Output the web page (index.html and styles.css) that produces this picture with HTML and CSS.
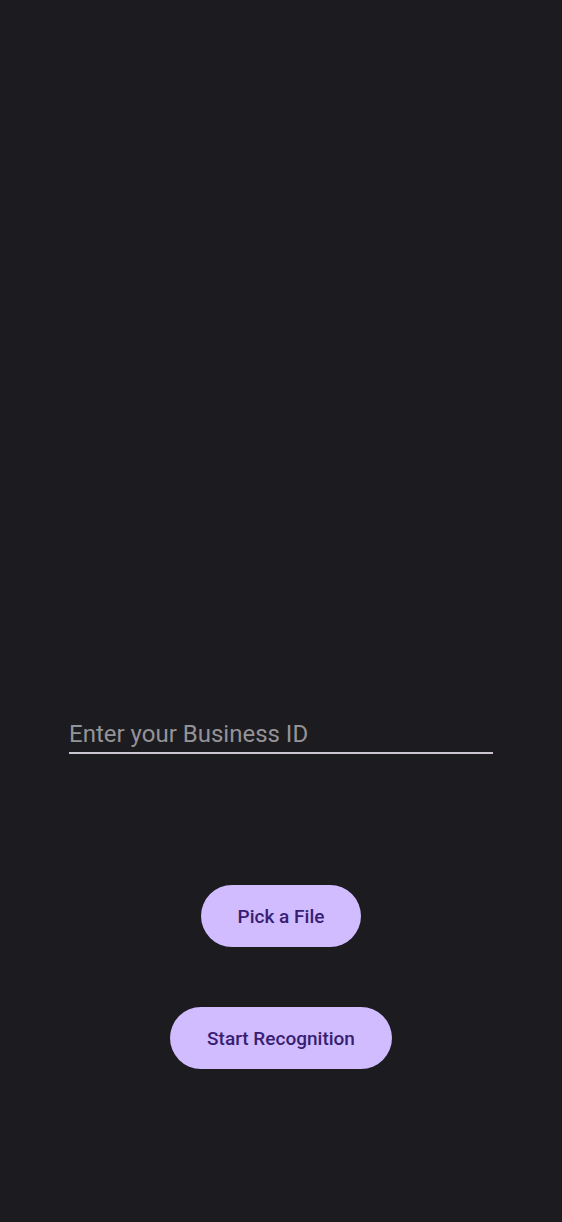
FILE: index.html
```html
<!DOCTYPE html>
<html>
<head>
<meta charset="utf-8">
<link rel="stylesheet" href="styles.css">
</head>
<body>
<main class="screen">
  <div class="field">
    <input class="field-input" type="text" placeholder="Enter your Business ID">
  </div>
  <button class="pill pill-pick">Pick a File</button>
  <button class="pill pill-start">Start Recognition</button>
</main>
</body>
</html>
```
FILE: styles.css
```css
html, body {
  margin: 0;
  padding: 0;
  background: #1c1b1f;
  height: 100%;
}
.screen {
  display: flex;
  flex-direction: column;
  align-items: center;
  padding-top: 716px;
  font-family: Roboto, "Liberation Sans", sans-serif;
}
.field {
  width: 424px;
  border-bottom: 2px solid #cac4d0;
}
.field-input {
  display: block;
  width: 100%;
  box-sizing: border-box;
  background: transparent;
  border: none;
  outline: none;
  padding: 4px 0 4px 0;
  font-family: Roboto, "Liberation Sans", sans-serif;
  font-size: 24px;
  line-height: 28px;
  color: #e6e1e5;
}
.field-input::placeholder {
  color: #949398;
}
.pill {
  border: none;
  background: #d0bcff;
  color: #381e72;
  font-family: Roboto, "Liberation Sans", sans-serif;
  font-size: 19px;
  font-weight: 500;
  height: 62px;
  border-radius: 31px;
  padding: 0 37px;
}
.pill-pick {
  margin-top: 131px;
}
.pill-start {
  margin-top: 60px;
}
```
